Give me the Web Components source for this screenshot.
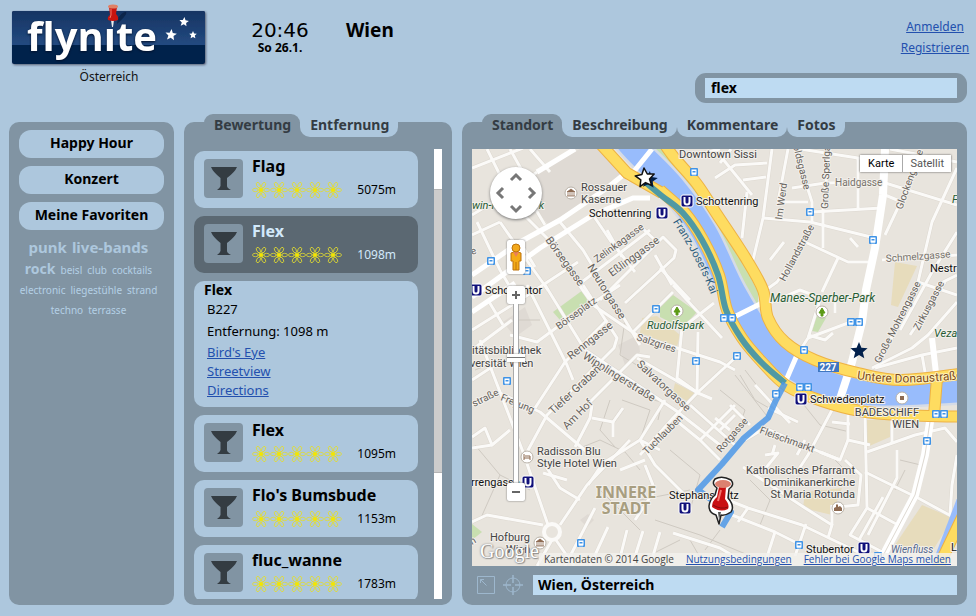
<!DOCTYPE html>
<html lang="de">
<head>
<meta charset="utf-8">
<meta name="viewport" content="width=device-width, initial-scale=1">
<title>flynite – Wien</title>
<style>
:root{--page:#adc7dd;--panel:#8194a3;--field:#bedbf2;--active:#5b6872;--ink:#343c43;--link:#2350ae}
*{box-sizing:border-box}
html,body{height:100%}
body{margin:0;background:var(--page);color:#000;font:13px/20px "Noto Sans",sans-serif;display:flex;flex-direction:column}
main{flex:1;min-height:0;display:grid;grid-template-columns:165px 268px minmax(0,1fr);gap:10px;padding:0 9px 11px}
</style>
</head>
<body>
<fly-header></fly-header>
<main>
  <fly-sidebar></fly-sidebar>
  <fly-panel tabs="Bewertung,Entfernung">
    <fly-results>
      <fly-venue name="Flag" distance="5075m"></fly-venue>
      <fly-venue name="Flex" distance="1098m" selected></fly-venue>
      <fly-detail></fly-detail>
      <fly-venue name="Flex" distance="1095m"></fly-venue>
      <fly-venue name="Flo's Bumsbude" distance="1153m"></fly-venue>
      <fly-venue name="fluc_wanne" distance="1783m"></fly-venue>
    </fly-results>
  </fly-panel>
  <fly-panel tabs="Standort,Beschreibung,Kommentare,Fotos">
    <fly-map></fly-map>
    <fly-location slot="footer"></fly-location>
  </fly-panel>
</main>
<script>
const BASE = `*{box-sizing:border-box}button{font:inherit;color:inherit;border:0;margin:0;padding:0;background:none;cursor:pointer}a{color:var(--link)}svg{display:block}h2,h3,p{margin:0}`;
function define(name, css, html) {
  customElements.define(name, class extends HTMLElement {
    constructor() {
      super();
      const t = document.createElement('template');
      t.innerHTML = `<style>${BASE}${css}</style>${typeof html === 'function' ? html(this) : html}`;
      this.attachShadow({mode: 'open'}).append(t.content.cloneNode(true));
    }
  });
}
const starPoints = (cx, cy, R, r, turn = 0) => Array.from({length: 10}, (_, i) => {
  const a = -Math.PI / 2 + turn + i * Math.PI / 5, d = i % 2 ? r : R;
  return (cx + d * Math.cos(a)).toFixed(1) + ',' + (cy + d * Math.sin(a)).toFixed(1);
}).join(' ');
/* Smooth path through a list of "x,y" points. */
const curve = pts => {
  const p = pts.split(' ').map(s => s.split(',').map(Number));
  let d = `M${p[0]}`;
  for (let i = 0; i < p.length - 1; i++) {
    const a = p[i - 1] || p[i], b = p[i], c = p[i + 1], e = p[i + 2] || c;
    d += `C${b[0] + (c[0] - a[0]) / 6} ${b[1] + (c[1] - a[1]) / 6} ${c[0] - (e[0] - b[0]) / 6} ${c[1] - (e[1] - b[1]) / 6} ${c[0]} ${c[1]}`;
  }
  return d;
};

define('fly-header', `
:host{display:flex;align-items:flex-start;padding:3px 9px 19px 8px}
.brand{display:flex;flex-direction:column;align-items:center;width:202px;font-size:12px;line-height:16px;color:#111}
.clock{width:74px;margin-left:33px;text-align:center;padding-top:16px}
.clock time{display:block;font:20px/22px "DejaVu Sans",sans-serif}
.clock span{display:block;font-weight:bold;font-size:12px;line-height:14px}
h2{font-size:19px;line-height:24px;padding:15px 0 0 29px}
.right{margin-left:auto;width:272px;padding-top:13px}
.links{display:flex;flex-direction:column;align-items:center;width:72px;margin:0 -4px 0 auto;font-size:12px;line-height:21px}
form{margin-top:15px;background:var(--panel);border-radius:11px;padding:5px 10px}
input{display:block;width:100%;height:20px;border:0;border-radius:0;background:var(--field);padding:0 6px;font:bold 14px/20px "Noto Sans",sans-serif;color:#000;outline:0}
`, `
<div class="brand">
  <svg width="202" height="66" viewBox="8 3 202 66" role="img" aria-label="flynite">
    <defs><linearGradient id="t" x1="0" y1="0" x2="0" y2="1"><stop offset="0" stop-color="#163463"/><stop offset="1" stop-color="#234a80"/></linearGradient>
    <filter id="s" x="-10%" y="-10%" width="120%" height="130%"><feDropShadow dx="1" dy="1" stdDeviation="1" flood-color="#334" flood-opacity=".7"/></filter></defs>
    <g filter="url(#s)"><rect x="12" y="11" width="193" height="53" rx="2" fill="#02204b"/><path d="M12 45V13q0-2 2-2H203q2 0 2 2V45Z" fill="url(#t)"/></g>
    <path d="M118 18q5-7 8-6q2 2-9 12z" fill="#02132f" opacity=".5"/>
    <text x="27" y="51" font-family="Open Sans,sans-serif" font-weight="700" font-size="40" fill="#fff" style="filter:drop-shadow(0 1px 1px #02102b)">flynıte</text>
    <polygon points="${starPoints(171,35,6,2.7,.1)}" fill="#fff"/><polygon points="${starPoints(184,22,5,2.3,.1)}" fill="#fff"/><polygon points="${starPoints(193,35,4,1.9)}" fill="#fff"/>
    <path d="M111 20h3l-1 7h-1z" fill="#eee"/><path d="M109 7h8l-1 7q3 3 2 6q-5 2-10 0q-1-3 2-5z" fill="#c9150f"/><ellipse cx="113" cy="6.500" rx="5" ry="2" fill="#e08065"/><path d="M111 9v6l-1 3" stroke="#f27766" fill="none"/>
  </svg>
  Österreich
</div>
<div class="clock"><time>20:46</time><span>So 26.1.</span></div>
<h2>Wien</h2>
<div class="right">
  <nav class="links"><a href="#anmelden">Anmelden</a><a href="#registrieren">Registrieren</a></nav>
  <form role="search"><input type="text" aria-label="Suche" value="flex"></form>
</div>`);

define('fly-sidebar', `
:host{display:flex;flex-direction:column;gap:8px;background:var(--panel);border-radius:10px;padding:8px 10px}
button{background:var(--page);border-radius:12px;height:28px;padding-bottom:2px;font-weight:bold;font-size:14px;line-height:26px}
nav{display:flex;flex-wrap:wrap;justify-content:center;align-items:baseline;column-gap:5px;margin:-1px -3px 0;padding-right:6px}
nav a{font-size:10px;line-height:20px;text-decoration:none;color:#b4d0e6}
nav .l{font-size:15px;line-height:21px;font-weight:bold;color:#adc7dd}nav .m{font-size:14px;line-height:21px;font-weight:bold;color:#adc7dd}
`, `<button type="button">Happy Hour</button><button type="button">Konzert</button><button type="button">Meine Favoriten</button>
<nav aria-label="Tags"><a class="l" href="#punk">punk</a><a class="l" href="#live">live-bands</a><a class="m" href="#rock">rock</a><a href="#beisl">beisl</a><a href="#club">club</a><a href="#cocktails">cocktails</a><a href="#electronic">electronic</a><a href="#liegestuehle">liegestühle</a><a href="#strand">strand</a><a href="#techno">techno</a><a href="#terrasse">terrasse</a></nav>`);

define('fly-panel', `
:host{display:flex;flex-direction:column;min-height:0;min-width:0;background:var(--panel);border-radius:10px}
.tabs{display:flex;align-items:flex-end;margin:-8px 20px 12px}
.tabs button{height:23px;padding:0 9px 2px 10px;font-weight:bold;font-size:14px;line-height:20px;color:var(--ink);background:var(--page);border-radius:0 0 10px 10px}
.tabs button[aria-selected=true]{background:var(--panel);border-radius:9px 9px 0 0}
.body{flex:1;min-height:0;display:flex;margin:0 10px}
.body ::slotted(*){flex:1;min-width:0}
`, el => `<div class="tabs" role="tablist">${el.getAttribute('tabs').split(',').map((t, i) => `<button type="button" role="tab" aria-selected="${i === 0}">${t}</button>`).join('')}</div>
<div class="body"><slot></slot></div><slot name="footer"></slot>`);

define('fly-results', `
:host{display:flex;justify-content:space-between;padding-bottom:6px}
.list{width:224px;overflow:hidden;display:flex;flex-direction:column;gap:8px;padding-top:2px}
.list ::slotted(*){flex:none}
.bar{width:8px;background:#fff;display:flex;flex-direction:column}
.bar::before{content:"";flex:40}.bar::after{content:"";flex:127}
.thumb{flex:283;background:#ccc;border:solid #b4b4b4;border-width:1px 0}
`, `<div class="list"><slot></slot></div><div class="bar" aria-hidden="true"><div class="thumb"></div></div>`);

const flower = [28,-28,90,-90,152,-152].map(a => `<ellipse cx="0" cy="-5.600" rx="1.700" ry="2.900" transform="rotate(${a})"/>`).join('');
const rays = [0,45,90,135].map(a => `<path d="M0-4V4" stroke-width=".7" transform="rotate(${a})"/>`).join('');
define('fly-venue', `
:host{display:block}
button{display:grid;grid-template-columns:39px 1fr;column-gap:9px;align-items:center;width:100%;padding:5px 22px 8px 10px;background:var(--page);border-radius:10px;text-align:left}
:host([selected]) button{background:var(--active);color:#d2e9fb}
.icon{width:39px;height:39px;border-radius:4px;background:var(--panel);margin-top:1px}
strong{display:block;font-size:16px;line-height:20px}
.row{display:flex;justify-content:space-between;align-items:flex-end;font-size:12px;line-height:20px;height:24px}
.row svg{align-self:center;margin-top:3px}
`, el => `<button type="button">
<svg class="icon" viewBox="0 0 39 39" aria-hidden="true"><path d="M7 8H33Q31 13 23 19V27Q23 29 27 31H13Q16 29 16.500 27V19Q9 13 7 8Z" fill="#343c42"/></svg>
<div><strong>${el.getAttribute('name')}</strong>
<div class="row"><svg width="90" height="18" viewBox="0 0 90 18" role="img" aria-label="5 Sterne">${[0,1,2,3,4].map(i => `<g transform="translate(${9 + i * 18} 9)" fill="none" stroke="#e2dc30" stroke-width=".8">${flower}${rays}<circle r="2" fill="#f2e600" stroke="none"/></g>`).join('')}</svg><span>${el.getAttribute('distance')}</span></div></div></button>`);

define('fly-detail', `
:host{display:block;background:var(--page);border-radius:10px;padding:0 13px 7px}
h3{font-size:14px;line-height:18px;margin-left:-3px}
p{line-height:20px;padding-bottom:2px}
a{display:block;width:max-content;line-height:19px}
`, `<h3>Flex</h3><p>B227</p><p>Entfernung: 1098 m</p><a href="#birdseye">Bird's Eye</a><a href="#streetview">Streetview</a><a href="#directions">Directions</a>`);

define('fly-location', `
:host{display:flex;align-items:center;gap:8px;padding:9px 10px 10px 15px}
input{flex:1;min-width:0;height:20px;border:0;border-radius:0;background:var(--field);padding:0 5px;margin-left:2px;font:bold 14px/20px "Noto Sans",sans-serif;color:#000;outline:0}
`, `<button type="button" aria-label="Karte vergrößern"><svg width="18" height="20" viewBox="0 0 18 20" fill="none" stroke="#9db7cd"><path d="M.5 1.500h17v17H.5zM3.500 8V4.500H7M3.500 4.500l6 6"/></svg></button>
<button type="button" aria-label="Position bestimmen"><svg width="20" height="20" viewBox="0 0 20 20" fill="none" stroke="#9db7cd"><circle cx="10" cy="10" r="7"/><path d="M10 0v8M10 12v8M0 10h8M12 10h8" stroke-width="1.500"/></svg></button>
<input type="text" aria-label="Ort" value="Wien, Österreich">`);

/* Map drawing: one shared coordinate space for areas, streets, labels and markers. */
const line = d => `<path d="M${d}"/>`;
const thin = ['472,168 523,148','487,149 510,195 527,218 547,238 577,282 590,300','510,149 530,185','530,149 550,172','472,215 505,195 537,172','477,222 500,270 510,287','500,222 523,255 548,290','520,242 535,267','472,235 500,222','545,225 530,200 510,195','578,285 650,230','600,300 663,237 676,250 674,258 625,303','560,222 583,250 640,345','607,230 622,257','640,226 655,240','593,215 610,240 635,272','472,330 520,300 578,262','510,335 537,342 560,325 620,285','527,285 567,365 573,380','488,300 503,325','535,408 565,362 607,320','583,285 617,338 614,348 547,415 527,452','545,285 585,350 675,410 720,445','590,402 637,355 650,357','637,358 698,393 712,399','593,305 637,335 720,362 735,370','633,332 673,292','682,328 677,378 698,393','682,328 714,303','698,332 697,393 673,418 640,455','697,393 735,358','673,285 722,338','660,268 690,300','655,255 672,285','472,350 512,320','472,380 498,363','500,393 540,412 587,452','480,340 510,418 523,452 548,525','472,405 495,393','472,437 485,428 492,445 510,430','492,445 472,448','592,405 590,418 575,447','592,418 613,422 623,408','613,422 613,437','640,440 665,400','673,418 700,440 720,460','690,405 735,445','700,440 715,425 735,405','715,418 730,430','730,405 750,425','755,385 790,423','768,408 798,422','745,440 765,428 820,452 840,460','720,430 735,415','472,522 487,515 543,525','560,525 587,485 630,440','543,462 560,488 580,500','543,473 567,480','552,540 537,566','556,540 574,566','640,440 655,465 690,500','645,465 655,490 635,520','600,465 640,440 660,450','605,460 588,485','620,470 645,460','595,508 565,566','608,527 590,566','627,530 618,566','643,531 632,566','660,532 650,566','673,533 720,548 740,560','715,495 748,508 802,525 858,552','732,515 775,532 795,542','748,508 738,522','775,532 766,560','806,524 795,556','743,467 805,508 832,525 828,538','832,505 832,525','722,158 752,195','715,178 735,165 767,163','772,149 763,218 753,260','788,149 778,202 808,202','743,180 766,177','747,192 742,238','763,218 810,222 875,238','812,212 882,208','795,149 812,202 812,222','830,149 823,208 823,248','858,158 858,208','800,149 858,158 882,158','792,188 825,183 882,182 957,205','810,225 805,242 777,282 763,292','805,242 848,262 875,262','838,258 822,292','882,260 957,255','920,149 912,178 885,235','957,168 932,222 918,282 880,362','885,195 902,202','957,232 932,272 900,330','850,238 858,247','890,149 957,162','918,282 957,295','945,282 910,335','937,285 957,275','872,368 912,348 928,335 957,302','875,368 922,355 957,348','922,355 925,372','808,338 848,323','820,300 808,338 797,355','770,303 800,290 818,297','835,300 835,313','808,335 825,340 833,333','832,410 808,455 795,475','848,415 848,440 870,445','832,422 850,424','865,415 867,508 850,535 888,555','867,452 915,435 945,428 957,442','892,415 892,443','865,472 918,498 953,517','867,508 898,525','897,450 897,478 868,535','883,497 859,540','848,440 840,460 820,452','845,460 861,475 858,505 838,507','765,455 778,453 760,475','775,445 772,455','797,455 805,440','957,455 952,485 950,515','770,260 784,242','695,155 720,149','731,149 720,163'].map(line).join('');
const alleys = ['610,400 600,430 615,447','622,400 650,410 640,440','645,398 662,402 658,420','570,452 600,440 625,452 640,470','600,490 640,530','655,520 700,535 760,560','640,500 690,490','670,450 700,475 690,510','800,400 820,425 850,432','720,390 745,410 735,440','745,370 768,400','735,375 770,420','740,375 755,400 790,420','750,480 770,500','770,500 760,525','690,540 705,566','720,530 705,550','900,460 925,466','905,470 895,490','475,445 500,475 480,520','500,475 530,490','625,320 620,355 645,370','515,320 540,320','640,560 680,540','475,370 500,360','835,460 845,470'].map(line).join('');
const river = curve('610,120 635,149 672,187 704,232 733,292 765,342 797,369 840,388 890,393 975,389');
const embankment = curve('660,190 685,213 703,240 719,275 727,310 742,338 762,362 787,386 822,401 860,411 900,415 975,417');
const eastQuay = curve('655,130 673,156 697,184 716,213 745,257 763,290 768,318 785,342 815,360 858,373 902,380 975,372');
const quays = `<path d="M585 127L627 173L662 193"/><path d="${embankment}"/><path d="${eastQuay}"/><path d="M937 378L934 416M968 505L936 572"/>`;

const label = (x, y, t, r = 0, o = {}) => `<text x="${x}" y="${y}"${r ? ` transform="rotate(${r} ${x} ${y})"` : ''} font-size="${o.s || 11}" fill="${o.f || '#555048'}"${o.a ? ` text-anchor="${o.a}"` : ''}${o.i ? ' font-style="italic"' : ''}${o.b ? ' font-weight="bold"' : ''}>${t}</text>`;
const K = {f:'#111'}, G = {f:'#265c33', i:1}, D = {f:'#444'}, S = {s:10, f:'#66625c'}, M = {s:11, f:'#66625c'};
const labels = [
 [679,158,'Downtown Sissi',0,D],[696,205,'Schottenring',0,K],[589,217,'Schottenring',0,K],[485,294,'Schottentor',0,K],
 [581,191,'Rossauer',0,D],[581,203,'Kaserne',0,D],[472,209,'win-Holub-Park',0,G],[472,354,'itätsbibliothek',0,D],[470,367,'versität Wien',0,D],
 [647,329,'Rudolfspark',0,G],[770,302,'Manes-Sperber-Park',0,{f:'#265c33',i:1,s:12}],[934,337,'Veza',0,G],[952,203,'F',0,G],[930,272,'Nestr',0,K],[810,403,'Schwedenplatz',0,K],
 [919,416,'BADESCHIFF',0,{a:'end',f:'#444'}],[919,428,'WIEN',0,{a:'end',f:'#444'}],
 [537,455,'Radisson Blu',0,D],[537,467,'Style Hotel Wien',0,D],[471,486,'rrengasse',0,K],[669,499,'Stephansplatz',0,K],
 [855,474,'Katholisches Pfarramt',0,{a:'end',f:'#444'}],[855,486,'Dominikanerkirche',0,{a:'end',f:'#444'}],[855,498,'St Maria Rotunda',0,{a:'end',f:'#444'}],
 [806,553,'Stubentor',0,K],[891,553,'Wienfluss',0,{f:'#55698e',i:1,s:10}],[951,551,'L',0,K],[490,541,'Hofburg',0,D],[506,553,'Wien',0,D],
 [545,240,'Börsegasse',54,M],[597,263,'Zelinkagasse',-36,S],[612,277,'Eßlinggasse',-36,M],[587,267,'Neutorgasse',58,M],
 [559,330,'Börseplatz',-36,S],[571,360,'Renngasse',-38,M],[582,358,'Wipplingerstraße',32,M],[553,415,'Tiefer Graben',-43,M],[567,430,'Am Hof',-45,M],
 [636,365,'Salvatorgasse',43,M],[636,340,'Salzgries',18,S],[500,400,'Freyung',22,S],[474,407,'straße',-26,S],[647,455,'Tuchlauben',-45,S],[721,453,'Rotgasse',-49,S],[759,433,'Fleischmarkt',20,S],
 [880,364,'Große Mohrengasse',-63,S],[919,331,'Zirkusgasse',-62,S],[902,210,'Glockengasse',-70,S],[785,282,'Hollandstraße',-62,S],[782,220,'Im Werd',-82,S],[828,209,'Große Sperlgasse',-88,S],
 [793,146,'oldsgasse',76,S],[835,186,'Haidgasse',0,{s:10,f:'#77736c'}],[886,262,'Schmelzgasse',-4,{s:10,f:'#77736c'}],[472,255,'e',-20,S],[472,545,'n',-30,S]
].map(a => label(...a)).join('');

const bus = [[491,261],[527,271],[694,172],[810,212],[873,240],[656,309],[696,361],[507,381],[724,318],[732,318],[851,322],[859,322],[804,350],[737,356],[800,387],[808,387],[776,394],[936,414],[944,414],[927,441],[581,543],[799,545],[878,556]]
 .map(([x, y]) => `<g transform="translate(${x} ${y})"><rect x="-4" y="-4" width="8" height="8" rx="1" fill="#3f93e6"/><path d="M-2.500-2.500h5v5h-1v1h-1v-1h-1v1h-1v-1h-1z" fill="#fff"/><path d="M-1.500-1h3v1.500h-3z" fill="#3f93e6"/></g>`).join('');
const metro = [[662,213],[687,201],[476,290],[801,399],[528,482],[685,508],[864,548]]
 .map(([x, y]) => `<rect x="${x-6}" y="${y-6}" width="12" height="12" rx="2" fill="#10107a" stroke="#fff"/><path d="M${x-2.5} ${y-4}v5q0 2.500 2.500 2.500t2.500-2.500v-5" fill="none" stroke="#fff" stroke-width="2"/>`).join('');
const disc = (x, y, inner) => `<g transform="translate(${x} ${y})"><circle r="6" fill="#fff" stroke="#b9b2a8"/>${inner}</g>`;
const museum = '<path d="M-4-1L0-4L4-1ZM-3 0v3M-1 0v3M1 0v3M3 0v3M-4 3h8" fill="#8d6a51" stroke="#8d6a51" stroke-width=".8"/>';
const tree = '<path d="M0-4L3 1H-3Z M-1 1H1V4H-1Z" fill="#5d9a16" stroke="#5d9a16"/>';

const mapArt = `<svg class="art" viewBox="472 149 485 417" preserveAspectRatio="xMidYMid slice" role="img" aria-label="Stadtplan Wien" font-family="Roboto,sans-serif">
<rect x="0" y="0" width="1500" height="1200" fill="#e8e4dd"/>
<g fill="#dfdad4"><path d="M537 172L580 149H600L625 175L600 193L548 224L528 200Z"/><path d="M503 322L525 307L532 325L515 337Z"/><path d="M618 345L638 335L640 352L625 365Z"/><path d="M580 520L588 514L594 520L587 527Z"/></g>
<g fill="#c8dfb0"><path d="M553 312L583 290L588 302L560 320Z"/><path d="M660 305L673 295L697 312L682 328L660 317Z"/><path d="M817 315L826 318L818 332L812 331Z"/><path d="M472 524L482 532L472 540Z"/></g>
<g fill="#e7dcbc"><path d="M642 318L657 316L680 335L677 347L640 333Z"/><path d="M675 383L695 393L688 402L673 392Z"/><path d="M895 262L917 266L898 307L891 305Z"/><path d="M867 420H890V437L867 447Z"/><path d="M805 492L842 488L832 515L803 508Z"/><path d="M922 505L953 518L928 558L895 545Z"/></g>
<g fill="none" stroke="#cfcac2" stroke-width="1">${alleys}</g>
<g fill="none" stroke="#ddd8d0" stroke-width="4" stroke-linejoin="round">${thin}</g>
<g fill="none" stroke="#fbfaf8" stroke-width="3" stroke-linejoin="round">${thin}</g>
<circle cx="552" cy="532" r="8" fill="#e8e4dd" stroke="#fbfaf8" stroke-width="4"/>
<g fill="none" stroke="#fff" stroke-width="5"><path d="M472 275L520 242L560 220L607 188L627 172M472 297L540 248L593 215L633 198L650 198M472 312L515 283M537 172L575 149"/><path d="M932 338L937 382" stroke-width="6"/><path d="M931 415L925 455L915 495L885 552L878 566" stroke-width="8"/></g>
<path d="M931 415L925 455L915 495L885 552L878 566" fill="none" stroke="#ddd8d0"/>
<path d="M640 149H668L692 180L712 213L742 260L758 292V318L740 300L700 220Z" fill="#c8dfb0"/>
<path d="${river}" fill="none" stroke="#d5dbe6" stroke-width="30"/>
<path d="${river}" fill="none" stroke="#98bcfc" stroke-width="25"/>
<path d="M962 495L935 566" stroke="#98bcfc" stroke-width="7"/>
<g fill="none" stroke="#fff"><path d="M627 180L652 149M797 355L784 385M736 316L764 302" stroke-width="5"/><path d="M885 149L883 195L875 248L866 290L862 322L852 362L838 405" stroke-width="8"/></g>
<g fill="none" stroke-linejoin="round"><g stroke="#eeb244" stroke-width="12">${quays}</g><g stroke="#fedc60" stroke-width="10">${quays}</g></g>
<path d="${curve('645,182 662,196 683,213 702,240 718,275 726,310 741,338 761,362 785,383')}" fill="none" stroke="#5099a3" stroke-width="6"/>
<path d="M785 383L776 400L768 418L757 427L744 438L722 464L698 490L712 500L731 512L722 527" fill="none" stroke="#4c98e8" stroke-opacity=".85" stroke-width="6" stroke-linejoin="round"/>
<defs><path id="kai" d="${curve('673,222 690,250 705,280 718,312')}"/><path id="donau" d="M857 379Q905 387 975 377"/></defs>
<g stroke="#f3f0eb" stroke-width="2" stroke-linejoin="round" paint-order="stroke">${labels}
<text font-size="12" fill="#7b4a20" stroke="#fff0b8"><textPath href="#donau">Untere Donaustraße</textPath></text>
<g font-family="Noto Sans,sans-serif" font-weight="bold" font-size="16" fill="#a89e80" text-anchor="middle"><text x="626" y="498">INNERE</text><text x="626" y="514">STADT</text></g></g>
<text font-size="11" fill="#2d5e7d"><textPath href="#kai">Franz-Josefs-Kai</textPath></text>
<rect x="818" y="362" width="21" height="10" fill="#3f76c0"/>${label(828,371,'227',0,{s:10,f:'#fff',a:'middle',b:1})}
${bus}${metro}
${disc(571,193,museum)}${disc(540,543,museum)}${disc(677,311,tree)}${disc(822,312,tree)}
${disc(902,398,'<rect x="-2" y="-2" width="4" height="4" fill="#8d6a51"/>')}${disc(527,457,'<path d="M-3-3V3M-3 1H3V3M-2-1H3V1" fill="none" stroke="#8d6a51"/>')}${disc(838,508,'<path d="M-4 3V0L-2-1V-3L-1-4L0-3V-1L2-2L4 0V3Z" fill="#8d6a51"/>')}
<polygon points="${starPoints(649,180,9,4,.1)}" fill="#02204b"/><polygon points="${starPoints(645,178,10,4.6,-.1)}" fill="#fff" stroke="#111" stroke-width="1.500" stroke-linejoin="round"/>
<polygon points="${starPoints(859,351,9,4)}" fill="#02204b"/>
<g transform="translate(720 500)" stroke-linejoin="round"><path d="M-5-21Q2-25 11-20Q15-15 9-11L8-2Q15 6 11 12Q5 16 1 15L-1 24L-4 15Q-11 13-11 6Q-10-1-5-5L-3-12Q-9-16-5-21Z" fill="#fff" stroke="#222" stroke-width="1.500"/><path d="M-2 12H1L-1 20Z" fill="#555"/><path d="M-1-13H6L5-1Q10 5 8 9Q0 13-8 7Q-8 1-3-3Z" fill="#c90f12"/><ellipse cx="3" cy="-16" rx="8" ry="4" fill="#dc8170"/><path d="M1-10L-2 1" stroke="#f3766f" stroke-width="2"/><path d="M-7 5Q1 10 8 7" stroke="#860b0d" fill="none"/></g>
</svg>`;

define('fly-map', `
:host{display:block;position:relative;overflow:hidden;background:#e8e4dd;font-family:Roboto,sans-serif}
.art{position:absolute;inset:0;width:100%;height:100%}
.nav{position:absolute;left:18px;top:18px;width:52px;display:flex;flex-direction:column;align-items:center}
.pan{width:52px;height:52px;border-radius:50%;background:#fff;box-shadow:0 1px 3px #777;display:grid;grid-template:repeat(3,1fr)/repeat(3,1fr);place-items:center;padding:2px}
.pan button:nth-child(1){grid-area:1/2}.pan button:nth-child(2){grid-area:2/1}.pan button:nth-child(3){grid-area:2/3}.pan button:nth-child(4){grid-area:3/2}
.box{width:18px;height:18px;background:#fff;border-radius:2px;box-shadow:0 0 2px #666;display:grid;place-items:center;flex:none}
.peg{height:34px;margin:21px 0 12px}
input{-webkit-appearance:none;appearance:none;writing-mode:vertical-lr;direction:rtl;width:18px;height:179px;margin:0;background:linear-gradient(90deg,transparent 6px,#aaa 6px 7px,#fff 7px 11px,#aaa 11px 12px,transparent 12px)}
input::-webkit-slider-thumb{-webkit-appearance:none;width:18px;height:8px;background:linear-gradient(#fff 3px,#777 3px 4px,#fff 4px);box-shadow:0 0 2px #777}
.type{position:absolute;right:6px;top:6px;display:flex;background:#fff;box-shadow:0 0 2px #555;font-size:11px;line-height:17px}
.type button{padding:0 7px;color:#555}.type button:first-child{color:#000;border-right:1px solid #aaa;padding:0 8px}
.logo{position:absolute;left:8px;bottom:6px;font:20px/18px "Liberation Serif",serif;color:#fff;text-shadow:0 0 2px #666,1px 1px 1px #999}
.credits{position:absolute;right:0;bottom:0;display:flex;gap:12px;background:#f3f1edcc;padding:0 6px 0 5px;font:10px/13px "Open Sans",sans-serif;color:#444;white-space:nowrap}
`, `${mapArt}
<div class="nav"><div class="pan">${['0','-90','90','180'].map((r, i) => `<button type="button" aria-label="${['Norden','Westen','Osten','Süden'][i]}"><svg width="14" height="14" viewBox="-7 -7 14 14"><path d="M-5 3L0-2L5 3" fill="none" stroke="#777" stroke-width="3" transform="rotate(${r})"/></svg></button>`).join('')}</div>
<button class="box peg" type="button" aria-label="Street View"><svg width="14" height="28" viewBox="0 0 14 28"><path d="M2 10Q7 7 12 10V18H10V27H4V18H2Z" fill="#f5ab16" stroke="#bd730c"/><path d="M4 9L7 14L10 9Z" fill="#e9805a"/><path d="M7 19V27" stroke="#bd730c"/><circle cx="7" cy="5" r="4" fill="#f3a91c" stroke="#bd730c"/></svg></button>
<button class="box" type="button" aria-label="Vergrößern"><svg width="10" height="10" viewBox="0 0 10 10"><path d="M5 1V9M1 5H9" stroke="#666" stroke-width="2"/></svg></button>
<input type="range" aria-label="Zoom" min="0" max="100" value="71">
<button class="box" type="button" aria-label="Verkleinern"><svg width="10" height="10" viewBox="0 0 10 10"><path d="M1 5H9" stroke="#666" stroke-width="2"/></svg></button></div>
<div class="type"><button type="button">Karte</button><button type="button">Satellit</button></div>
<div class="logo">Google</div>
<div class="credits"><span>Kartendaten © 2014 Google</span><a href="#terms">Nutzungsbedingungen</a><a href="#report">Fehler bei Google Maps melden</a></div>`);
</script>
</body>
</html>
